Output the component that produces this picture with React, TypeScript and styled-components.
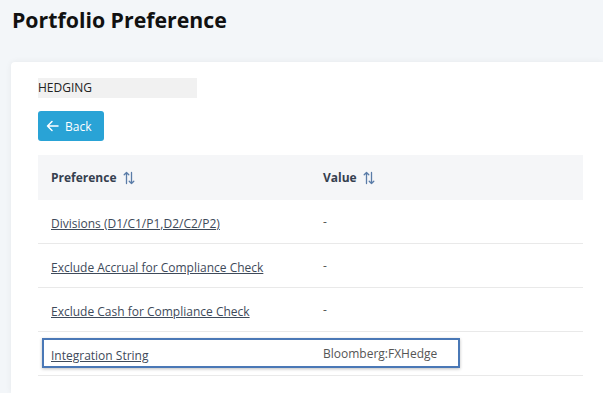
import React from "react";
import styled, { createGlobalStyle } from "styled-components";

const GlobalStyle = createGlobalStyle`
    html, body { margin: 0; padding: 0; background: #f3f6f9; }
    body { font-family: "Open Sans", "Noto Sans", sans-serif; }
`;

const Page = styled.div`
    width: 603px;
    height: 393px;
    overflow: hidden;
    display: flex;
    flex-direction: column;
`;

const Title = styled.h1`
    margin: 0;
    padding: 5px 12px 0;
    height: 62px;
    box-sizing: border-box;
    font-size: 21.3px;
    font-weight: 700;
    color: #111;
`;

const Card = styled.div`
    margin-left: 11px;
    flex: 1;
    background: #fff;
    border-radius: 4px 0 0 0;
    box-shadow: 0 0 6px rgba(0, 0, 0, 0.06);
    padding: 16px 20px 0 27px;
`;

const Tag = styled.div`
    width: 159px;
    height: 20px;
    background: #f1f1f1;
    font-size: 12px;
    line-height: 20px;
    color: #222;
`;

const BackButton = styled.button`
    margin-top: 13px;
    width: 66px;
    height: 30px;
    border: none;
    border-radius: 3px;
    background: #29a3d6;
    color: #fff;
    font-family: inherit;
    font-size: 12px;
    display: flex;
    align-items: center;
    gap: 6px;
    padding: 0 8px;
`;

const Table = styled.div`
    margin-top: 14px;
    width: 545px;
`;

const Row = styled.div<{ $head?: boolean }>`
    position: relative;
    display: grid;
    grid-template-columns: 285px 1fr;
    align-items: center;
    box-sizing: border-box;
    height: ${p => (p.$head ? "45px" : "44px")};
    background: ${p => (p.$head ? "#f5f6f8" : "#fff")};
    border-bottom: ${p => (p.$head ? "none" : "1px solid #e9e9e9")};
`;

const HeadCell = styled.div<{ $first?: boolean }>`
    padding-left: ${p => (p.$first ? "13px" : "0")};
    font-size: 12px;
    font-weight: 700;
    color: #35404f;
    display: flex;
    align-items: center;
    gap: 6px;
`;

const LinkCell = styled.a`
    margin-left: 13px;
    font-size: 12px;
    color: #3e4a5a;
    text-decoration: underline;
    cursor: pointer;
`;

const ValueCell = styled.div`
    font-size: 12px;
    color: #555;
`;

const Highlight = styled.div`
    position: absolute;
    left: 4px;
    top: 6px;
    width: 418px;
    height: 30px;
    box-sizing: border-box;
    border: 2px solid #4a78b6;
    box-shadow: 0 1px 3px rgba(0, 0, 0, 0.25);
    pointer-events: none;
`;

const SortIcon = () => (
    <svg width="12" height="14" viewBox="0 0 12 14" fill="none" stroke="#5a7ca8" strokeWidth="1.3" strokeLinecap="round" strokeLinejoin="round">
        <path d="M3.5 12.5V1.5M1.2 3.8l2.3-2.3 2.3 2.3" />
        <path d="M8.5 1.5v11M6.2 10.2l2.3 2.3 2.3-2.3" />
    </svg>
);

const ArrowLeft = () => (
    <svg width="13" height="12" viewBox="0 0 13 12" fill="none" stroke="#fff" strokeWidth="1.5" strokeLinecap="round" strokeLinejoin="round">
        <path d="M12 6H1.5M6 1.5L1.5 6 6 10.5" />
    </svg>
);

const rows = [
    { name: "Divisions (D1/C1/P1,D2/C2/P2)", value: "-" },
    { name: "Exclude Accrual for Compliance Check", value: "-" },
    { name: "Exclude Cash for Compliance Check", value: "-" },
    { name: "Integration String", value: "Bloomberg:FXHedge", marked: true },
];

export default function App() {
    return (
        <Page>
            <GlobalStyle />
            <Title>Portfolio Preference</Title>
            <Card>
                <Tag>HEDGING</Tag>
                <BackButton><ArrowLeft />Back</BackButton>
                <Table>
                    <Row $head>
                        <HeadCell $first>Preference <SortIcon /></HeadCell>
                        <HeadCell>Value <SortIcon /></HeadCell>
                    </Row>
                    {rows.map(r => (
                        <Row key={r.name}>
                            <div><LinkCell>{r.name}</LinkCell></div>
                            <ValueCell>{r.value}</ValueCell>
                            {r.marked && <Highlight />}
                        </Row>
                    ))}
                </Table>
            </Card>
        </Page>
    );
}
